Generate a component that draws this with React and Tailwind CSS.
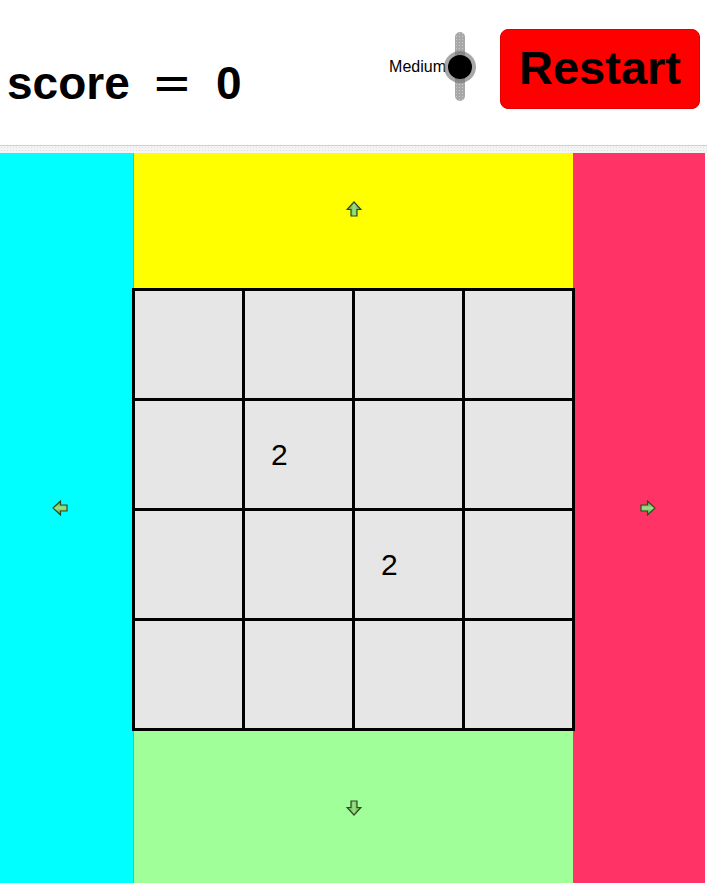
import React from "react";

function Arrow({ dir, size = 16 }) {
  const rot = { up: 0, right: 90, down: 180, left: 270 }[dir];
  return (
    <svg width={size} height={size} viewBox="0 0 16 16" style={{ transform: `rotate(${rot}deg)` }}>
      <defs>
        <linearGradient id={`g-${dir}`} x1="0" y1="0" x2="1" y2="0">
          <stop offset="0" stopColor="#3f9a2a" />
          <stop offset="0.5" stopColor="#9fe08a" />
          <stop offset="1" stopColor="#4aa534" />
        </linearGradient>
      </defs>
      <path
        d="M8 1 L15 8.5 L11 8.5 L11 15 L5 15 L5 8.5 L1 8.5 Z"
        fill={`url(#g-${dir})`}
        stroke="#2e4a22"
        strokeWidth="1.2"
        strokeLinejoin="miter"
      />
    </svg>
  );
}

const cells = [
  ["", "", "", ""],
  ["", "2", "", ""],
  ["", "", "2", ""],
  ["", "", "", ""],
];

export default function App() {
  return (
    <div className="w-[707px] overflow-hidden bg-white" style={{ fontFamily: '"Liberation Sans", Arial, sans-serif' }}>
      <header className="h-[145px] flex items-start justify-between">
        <div className="pl-[7px] pt-[58px] flex items-baseline text-black font-bold text-[46px] leading-none">
          <span>score</span>
          <span className="ml-[22px] mr-[24px] font-normal text-[48px]" style={{ fontFamily: '"DejaVu Sans", sans-serif' }}>=</span>
          <span>0</span>
        </div>
        <div className="flex items-start pt-[29px] pr-[7px]">
          <div className="flex items-center h-[76px]">
            <span className="text-[16px] text-black mr-[-2px]">Medium</span>
            <div className="relative w-[32px] h-[76px]">
              <div className="absolute left-[11px] top-[3px] w-[10px] h-[69px] rounded-full bg-[#a8a8a8]" style={{ backgroundImage: "radial-gradient(#c8c8c8 0.6px, transparent 0.8px)", backgroundSize: "3px 3px" }} />
              <div className="absolute left-0 top-[22px] w-[32px] h-[32px] rounded-full bg-[rgba(110,110,110,0.6)]" />
              <div className="absolute left-[4px] top-[26px] w-[24px] h-[24px] rounded-full bg-black" />
            </div>
          </div>
          <button className="ml-[24px] w-[200px] h-[80px] rounded-[8px] bg-[#ff0000] border border-[#e00000] text-black font-bold text-[47px] leading-none flex items-center justify-center pb-[4px]">
            Restart
          </button>
        </div>
      </header>
      <div className="h-px bg-[#d0d0d0]" />
      <div className="h-[7px] bg-[#f4f4f4]" style={{ backgroundImage: "radial-gradient(#e0e0e0 0.6px, transparent 0.8px)", backgroundSize: "3px 3px" }} />
      <div className="flex w-[705px] h-[740px]">
        <div className="w-[134px] bg-[#00ffff] border-r border-[#22cccc] flex items-center justify-center pb-[30px] pr-[14px]">
          <Arrow dir="left" size={16} />
        </div>
        <div className="w-[439px] flex flex-col">
          <div className="h-[135px] bg-[#ffff00] flex justify-center pt-[48px]">
            <Arrow dir="up" size={16} />
          </div>
          <div className="relative z-10 -mx-[2px] grid grid-cols-4 gap-[3px] p-[3px] bg-black w-[443px]">
            {cells.flat().map((v, i) => (
              <div key={i} className="h-[107px] bg-[#e6e6e6] flex items-center pl-[26px] text-[30px] text-black">
                {v}
              </div>
            ))}
          </div>
          <div className="flex-1 bg-[#a0ff99] flex justify-center pt-[69px]">
            <Arrow dir="down" size={16} />
          </div>
        </div>
        <div className="w-[132px] bg-[#ff3366] flex items-center justify-center pb-[30px] pl-[18px]">
          <Arrow dir="right" size={16} />
        </div>
      </div>
    </div>
  );
}
